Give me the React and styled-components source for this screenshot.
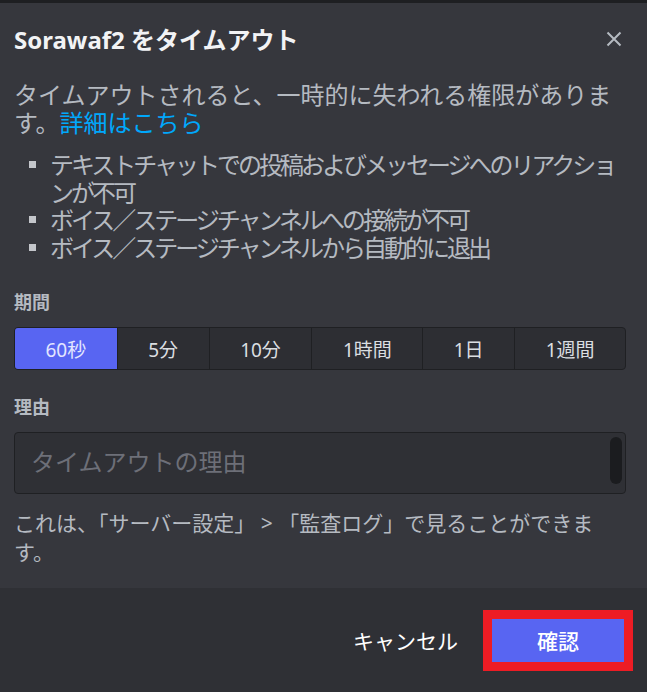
import styled, { createGlobalStyle } from 'styled-components';

const GlobalStyle = createGlobalStyle`
  html, body {
    margin: 0;
    padding: 0;
    background: #1e1f22;
  }
  * {
    box-sizing: border-box;
  }
`;

const FONT = `"Noto Sans", "Noto Sans CJK JP", sans-serif`;

const Modal = styled.div`
  display: flex;
  flex-direction: column;
  height: 689px;
  margin-top: 3px;
  background: #36373d;
  font-family: ${FONT};
`;

const Content = styled.div`
  display: flex;
  flex: 1;
  flex-direction: column;
  padding: 22px 21px 0 14px;
`;

const Header = styled.div`
  display: flex;
  justify-content: space-between;
  align-items: center;
  height: 30px;
`;

const Title = styled.h1`
  margin: 0;
  color: #f2f3f5;
  font-size: 24px;
  font-weight: 700;
  line-height: 30px;
`;

const CloseButton = styled.button`
  display: flex;
  width: 24px;
  height: 24px;
  margin-top: -3px;
  padding: 0;
  justify-content: center;
  align-items: center;
  border: none;
  background: transparent;
  color: #b5bac1;
  cursor: pointer;
`;

const Description = styled.p`
  margin: 26px 0 0;
  color: #b5bac1;
  font-size: 24px;
  line-height: 28px;
`;

const Link = styled.a`
  color: #00a8fc;
  text-decoration: none;
`;

const List = styled.ul`
  margin: 14px 0 0;
  padding: 0 0 0 36px;
  list-style: none;
`;

const Item = styled.li`
  position: relative;
  color: #b5bac1;
  font-size: 24px;
  letter-spacing: -3px;
  line-height: 27.5px;

  &::before {
    content: '';
    position: absolute;
    left: -21px;
    top: 10px;
    width: 7px;
    height: 7px;
    background: #c4c6cb;
  }
`;

const Label = styled.h2`
  margin: ${({ $top }) => $top}px 0 0;
  color: #b5bac1;
  font-size: 18px;
  font-weight: 700;
  line-height: 24px;
`;

const Segments = styled.div`
  display: flex;
  height: 43px;
  margin-top: 13px;
  border: 1px solid #1f2023;
  border-radius: 4px;
  background: #2d2e33;
  overflow: hidden;
`;

const Segment = styled.button`
  display: flex;
  flex: 1 1 auto;
  justify-content: center;
  align-items: center;
  padding: 0 10px;
  border: none;
  border-left: 1px solid #1f2023;
  background: ${({ $active }) => ($active ? '#5865f2' : 'transparent')};
  color: ${({ $active }) => ($active ? '#e3e5ff' : '#dbdee1')};
  font-family: ${FONT};
  font-size: 19px;
  cursor: pointer;

  &:first-child {
    border-left: none;
  }
`;

const Field = styled.div`
  position: relative;
  height: 62px;
  margin-top: 13px;
  border: 1px solid #1f2023;
  border-radius: 4px;
  background: #2f3035;
`;

const Reason = styled.textarea`
  display: block;
  width: 100%;
  height: 100%;
  padding: 14px 16px;
  border: none;
  outline: none;
  resize: none;
  background: transparent;
  color: #dbdee1;
  font-family: ${FONT};
  font-size: 24px;
  line-height: 30px;

  &::placeholder {
    color: #6d6f78;
  }
`;

const ScrollThumb = styled.div`
  position: absolute;
  top: 4px;
  right: 3px;
  width: 12px;
  height: 47px;
  border-radius: 6px;
  background: #1b1c1f;
`;

const Note = styled.p`
  max-width: 592px;
  margin: 15px 0 0;
  color: #b5bac1;
  font-size: 21px;
  line-height: 28.5px;
`;

const Footer = styled.div`
  display: flex;
  height: 104px;
  padding-right: 23px;
  justify-content: flex-end;
  align-items: center;
  background: #2f3035;
`;

const CancelButton = styled.button`
  height: 43px;
  margin-right: 17px;
  padding: 0 17px;
  border: none;
  background: transparent;
  color: #ffffff;
  font-family: ${FONT};
  font-size: 21px;
  cursor: pointer;
`;

const ConfirmButton = styled.button`
  width: 132px;
  height: 43px;
  border: none;
  border-radius: 0;
  outline: 9px solid #ed1c24;
  background: #5865f2;
  color: #ffffff;
  font-family: ${FONT};
  font-size: 21px;
  font-weight: 500;
  cursor: pointer;
`;

const durations = ['60秒', '5分', '10分', '1時間', '1日', '1週間'];

export default function App() {
  return (
    <>
      <GlobalStyle />
      <Modal>
        <Content>
          <Header>
            <Title>Sorawaf2 をタイムアウト</Title>
            <CloseButton aria-label="閉じる">
              <svg width="16" height="16" viewBox="0 0 16 16">
                <path d="M1.5 1.5 L14.5 14.5 M14.5 1.5 L1.5 14.5" stroke="currentColor" strokeWidth="2" />
              </svg>
            </CloseButton>
          </Header>
          <Description>
            タイムアウトされると、一時的に失われる権限があります。<Link href="#">詳細はこちら</Link>
          </Description>
          <List>
            <Item>テキストチャットでの投稿およびメッセージへのリアクションが不可</Item>
            <Item>ボイス／ステージチャンネルへの接続が不可</Item>
            <Item>ボイス／ステージチャンネルから自動的に退出</Item>
          </List>
          <Label $top={29}>期間</Label>
          <Segments>
            {durations.map((d, i) => (
              <Segment key={d} $active={i === 0}>
                {d}
              </Segment>
            ))}
          </Segments>
          <Label $top={25}>理由</Label>
          <Field>
            <Reason placeholder="タイムアウトの理由" />
            <ScrollThumb />
          </Field>
          <Note>これは、「サーバー設定」 &gt; 「監査ログ」で見ることができます。</Note>
        </Content>
        <Footer>
          <CancelButton>キャンセル</CancelButton>
          <ConfirmButton>確認</ConfirmButton>
        </Footer>
      </Modal>
    </>
  );
}
